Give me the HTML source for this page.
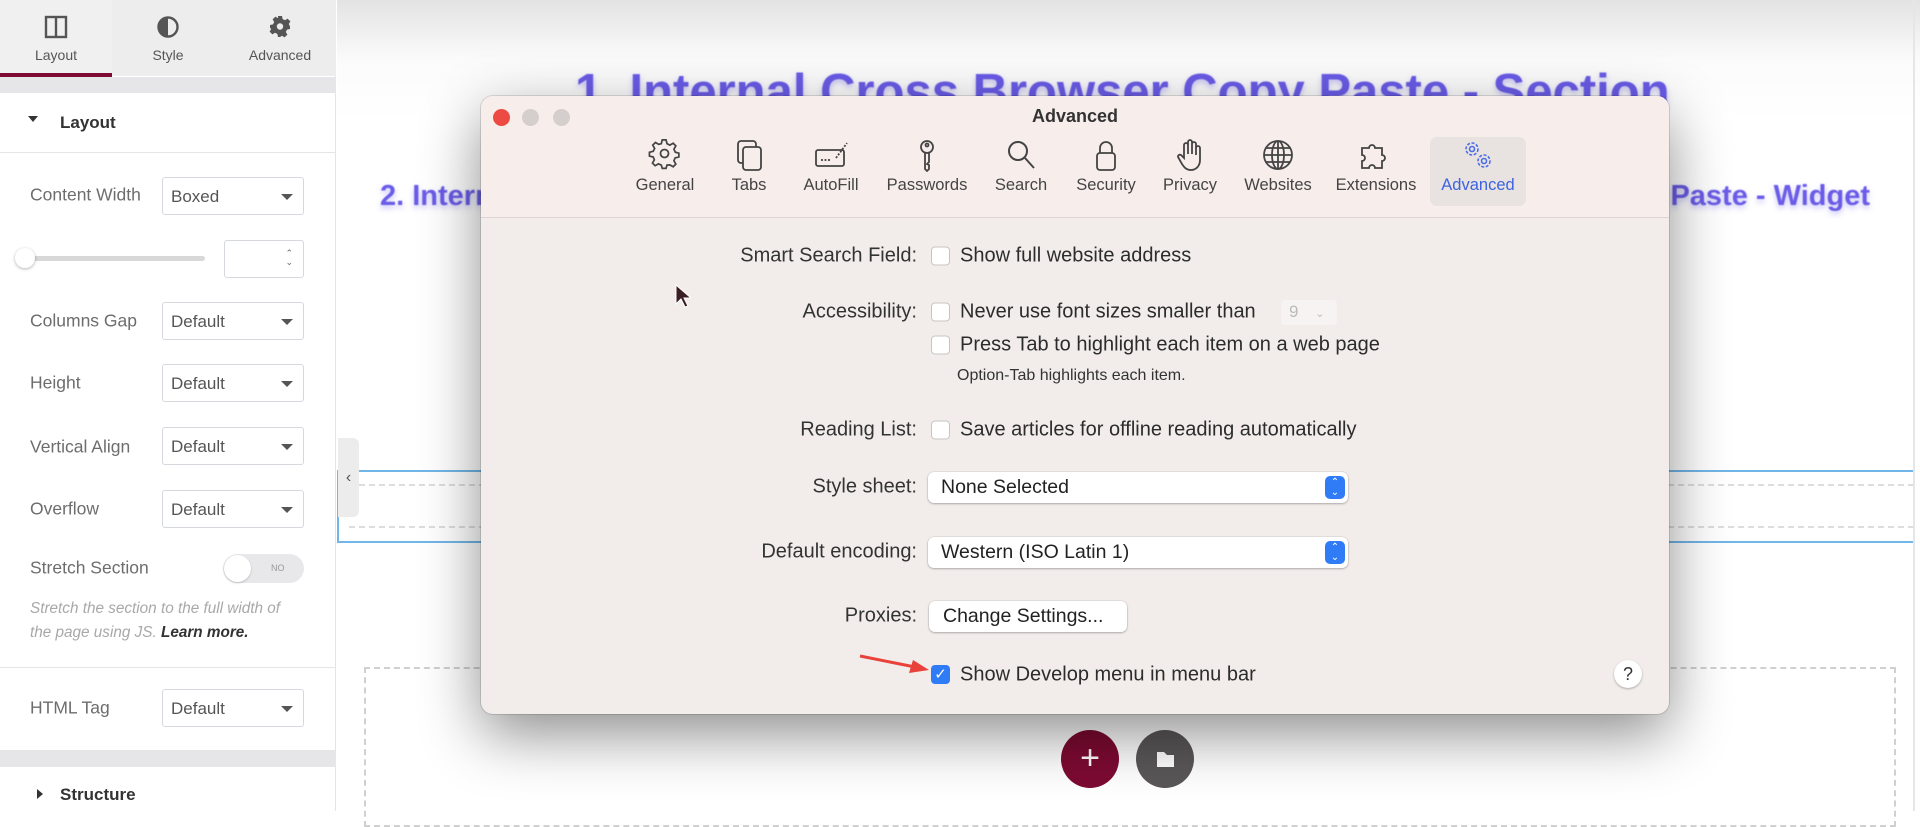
<!DOCTYPE html>
<html><head><meta charset="utf-8"><style>
*{box-sizing:border-box;margin:0;padding:0}
body{width:1920px;height:811px;overflow:hidden;background:#fff;font-family:"Liberation Sans",sans-serif;position:relative}
.abs{position:absolute}
#left{left:0;top:0;width:336px;height:811px;background:#fff;border-right:1px solid #e4e4e4}
.tab{position:absolute;top:0;width:112px;height:76px;text-align:center;color:#555;font-size:14px;background:#ededed}
.tab .lbl{position:absolute;top:47px;width:100%}
.tab svg{position:absolute;top:15px;left:44px}
.lab{position:absolute;left:30px;font-size:17.5px;color:#6d6d6d;transform:translateY(-50%)}
.sel{position:absolute;left:162px;width:142px;height:38px;border:1px solid #d5d8dc;border-radius:3px;font-size:17px;color:#555;padding:9px 8px}
.sel:after{content:"";position:absolute;right:10px;top:16px;border:6px solid transparent;border-top:6px solid #555;border-bottom:0}
#canvas{left:337px;top:0;width:1583px;height:811px;background:linear-gradient(#e3e3e3 0,#fbfbfb 60px,#fff 120px)}
.ttl{position:absolute;color:#6a5ce8;font-weight:bold;filter:blur(.6px);text-shadow:0 3px 6px rgba(100,90,230,.35);white-space:nowrap}
#dlg{left:481px;top:96px;width:1188px;height:618px;background:#f2edeb;border-radius:12px;box-shadow:0 20px 60px rgba(0,0,0,.45),0 0 0 1px rgba(0,0,0,.12);overflow:hidden}
#tb{position:absolute;left:0;top:0;width:100%;height:122px;background:#f7eeeb;border-bottom:1px solid #dcd5d3}
.tl{position:absolute;top:13px;width:17px;height:17px;border-radius:50%;background:#d4cfcd}
.ti{position:absolute;top:42px;width:100px;text-align:center;font-size:16.5px;color:#444}
.ti svg{display:block;margin:0 auto 4px;width:34px;height:34px}
.dl{position:absolute;right:752px;font-size:20px;color:#333;transform:translateY(-50%);white-space:nowrap}
.cb{position:absolute;left:450px;width:19px;height:19px;border:1px solid #c9c4c2;border-radius:4px;background:#fff;transform:translateY(-50%)}
.dt{position:absolute;left:479px;font-size:20px;color:#2c2c2c;transform:translateY(-50%);white-space:nowrap}
.pop{position:absolute;left:447px;width:420px;height:31px;background:#fff;border-radius:6px;box-shadow:0 1px 2px rgba(0,0,0,.25),0 0 0 .5px rgba(0,0,0,.1);font-size:19.5px;color:#222;padding:4px 13px}
.pop i{position:absolute;right:3px;top:4px;width:20px;height:23px;border-radius:5px;background:#2f7cf6;color:#fff;font-style:normal;font-size:10px;line-height:10px;text-align:center;padding-top:2px}
</style></head><body>

<div id="canvas" class="abs">
 <div class="ttl" style="left:238px;top:64px;font-size:49px">1. Internal Cross Browser Copy Paste - Section</div>
 <div class="ttl" style="left:43px;top:180px;font-size:29px">2. Internal Cross Browser Copy Paste - Widget</div>
 <div class="ttl" style="right:50px;top:180px;font-size:29px">Cross Browser Copy Paste - Widget</div>
 <div class="abs" style="left:0;top:470px;width:1577px;height:73px;border:2px solid #71b6e8;border-right:none"></div>
 <div class="abs" style="left:12px;top:484px;width:1565px;height:44px;border-top:2px dashed #ddd;border-bottom:2px dashed #ddd"></div>
 <div class="abs" style="left:27px;top:667px;width:1532px;height:160px;border:2px dashed #d0d0d0"></div>
 <div class="abs" style="left:1576px;top:0;width:2px;height:811px;background:#e6e6e6"></div>
 <div class="abs" style="left:724px;top:730px;width:58px;height:58px;border-radius:50%;background:#7d0a32;color:#fff;font-size:34px;text-align:center;line-height:56px">+</div>
 <div class="abs" style="left:799px;top:730px;width:58px;height:58px;border-radius:50%;background:#5a5758">
  <svg width="58" height="58" viewBox="0 0 58 58"><path d="M21 22h7l3 3h7v12H21z" fill="#fff"/></svg></div>
 <div class="abs" style="left:1px;top:438px;width:21px;height:79px;background:#ececec;border-radius:0 6px 6px 0;color:#555;font-size:16px;text-align:center;line-height:79px">‹</div>
</div>

<div id="left" class="abs">
 <div class="tab" style="left:0;background:#f0f0f0">
  <svg width="24" height="24" viewBox="0 0 24 24"><rect x="2" y="2" width="20" height="20" fill="none" stroke="#555" stroke-width="2.4"/><path d="M12 2v20" stroke="#555" stroke-width="2.4"/></svg><div class="lbl">Layout</div></div>
 <div class="abs" style="left:0;top:73px;width:112px;height:4px;background:#7d0a32"></div>
 <div class="tab" style="left:112px">
  <svg width="24" height="24" viewBox="0 0 24 24"><circle cx="12" cy="12" r="9.5" fill="none" stroke="#555" stroke-width="2.4"/><path d="M12 2.5a9.5 9.5 0 0 0 0 19z" fill="#555"/></svg><div class="lbl">Style</div></div>
 <div class="tab" style="left:224px">
  <svg width="24" height="24" viewBox="0 0 24 24"><path d="M10 1h4l.6 3 2.4 1.2 2.6-1.6 2.8 2.8-1.6 2.6L22 11.4V14l-3 .6-1.2 2.4 1.6 2.6-2.8 2.8-2.6-1.6L12 22h-2l-.6-3-2.4-1.2-2.6 1.6-2.8-2.8 1.6-2.6L2 12.6V10l3-.6L6.2 7 4.6 4.4 7.4 1.6 10 3.2z" fill="#555"/><circle cx="12" cy="11.5" r="3.2" fill="#ededed"/></svg><div class="lbl">Advanced</div></div>
 <div class="abs" style="left:0;top:77px;width:336px;height:16px;background:#e6e6e8"></div>
 <div class="abs" style="left:28px;top:116px;border:5px solid transparent;border-top:6px solid #333;border-bottom:0"></div>
 <div class="abs" style="left:60px;top:113px;font-size:17px;font-weight:bold;color:#333">Layout</div>
 <div class="abs" style="left:0;top:152px;width:336px;height:1px;background:#e6e6e6"></div>
 <div class="lab" style="top:195px">Content Width</div><div class="sel" style="top:177px">Boxed</div>
 <div class="abs" style="left:30px;top:256px;width:175px;height:5px;background:#d8d8d8;border-radius:3px"></div>
 <div class="abs" style="left:15px;top:248px;width:20px;height:20px;background:#fff;border-radius:50%;box-shadow:0 1px 3px rgba(0,0,0,.3)"></div>
 <div class="abs" style="left:224px;top:240px;width:80px;height:38px;border:1px solid #d5d8dc;border-radius:3px;font-size:9px;color:#666;text-align:right;padding:8px 10px;line-height:9px">⌃<br>⌄</div>
 <div class="lab" style="top:321px">Columns Gap</div><div class="sel" style="top:302px">Default</div>
 <div class="lab" style="top:383px">Height</div><div class="sel" style="top:364px">Default</div>
 <div class="lab" style="top:447px">Vertical Align</div><div class="sel" style="top:427px">Default</div>
 <div class="lab" style="top:509px">Overflow</div><div class="sel" style="top:490px">Default</div>
 <div class="lab" style="top:568px">Stretch Section</div>
 <div class="abs" style="left:223px;top:554px;width:81px;height:29px;border-radius:15px;background:#e8e8ea;font-size:9px;color:#999;padding:9px 0 0 48px">NO</div>
 <div class="abs" style="left:224px;top:555px;width:27px;height:27px;border-radius:50%;background:#fff;box-shadow:0 1px 2px rgba(0,0,0,.2)"></div>
 <div class="abs" style="left:30px;top:597px;width:285px;font-size:15.3px;line-height:24px;font-style:italic;color:#a8a8a8">Stretch the section to the full width of<br>the page using JS. <b style="color:#333">Learn more.</b></div>
 <div class="abs" style="left:0;top:667px;width:336px;height:1px;background:#e6e6e6"></div>
 <div class="lab" style="top:708px">HTML Tag</div><div class="sel" style="top:689px">Default</div>
 <div class="abs" style="left:0;top:750px;width:336px;height:17px;background:#e6e6e8"></div>
 <div class="abs" style="left:37px;top:789px;border:5px solid transparent;border-left:6px solid #333;border-right:0"></div>
 <div class="abs" style="left:60px;top:785px;font-size:17px;font-weight:bold;color:#333">Structure</div>
</div>

<div id="dlg" class="abs">
 <div id="tb">
  <div class="tl" style="left:12px;background:#ec4a43"></div>
  <div class="tl" style="left:41px"></div>
  <div class="tl" style="left:72px"></div>
  <div class="abs" style="left:0;top:10px;width:100%;text-align:center;font-size:18px;font-weight:bold;color:#333">Advanced</div>
  <div class="abs" style="left:949px;top:41px;width:96px;height:69px;background:#e8e2e1;border-radius:7px"></div>
  <div class="ti" style="left:134px"><svg viewBox="0 0 34 34" fill="none" stroke="#444" stroke-width="1.8"><path d="M15 4h4l1 4 3 1.5 3.5-2 2.8 2.8-2 3.5L28.8 17l3.7 1v4l-4 1-1.2 3 2 3.5-2.8 2.8-3.5-2L20 30.5 19 34h-4l-1-3.5-3-1.3-3.5 2-2.8-2.8 2-3.5L5.5 22l-4-1v-4l4-1L7 13 5 9.5l2.8-2.8 3.5 2L14 8z" transform="scale(.95) translate(0,-2)"/><circle cx="16.5" cy="15.5" r="4"/></svg>General</div>
  <div class="ti" style="left:218px"><svg viewBox="0 0 34 34" fill="none" stroke="#444" stroke-width="1.8"><rect x="6" y="3" width="18" height="22" rx="3"/><rect x="11" y="9" width="18" height="23" rx="3" fill="#f7eeeb"/></svg>Tabs</div>
  <div class="ti" style="left:300px"><svg viewBox="0 0 34 34" fill="none" stroke="#444" stroke-width="1.8"><rect x="2" y="12" width="28" height="16" rx="2"/><path d="M22 20L33 5M7 22h10" stroke-dasharray="2 1.5"/></svg>AutoFill</div>
  <div class="ti" style="left:396px"><svg viewBox="0 0 34 34" fill="none" stroke="#444" stroke-width="1.8"><circle cx="17" cy="9" r="6"/><circle cx="17" cy="7" r="1.5"/><path d="M15 15v16l2 2 2-2v-4l-2-1 2-2v-9"/></svg>Passwords</div>
  <div class="ti" style="left:490px"><svg viewBox="0 0 34 34" fill="none" stroke="#444" stroke-width="2"><circle cx="14" cy="13" r="9"/><path d="M21 20l9 10"/></svg>Search</div>
  <div class="ti" style="left:575px"><svg viewBox="0 0 34 34" fill="none" stroke="#444" stroke-width="1.8"><path d="M11 15V10a6 6 0 0 1 12 0v5"/><rect x="8" y="15" width="18" height="17" rx="3"/></svg>Security</div>
  <div class="ti" style="left:659px"><svg viewBox="0 0 34 34" fill="none" stroke="#444" stroke-width="1.8"><path d="M11 20V7a2 2 0 0 1 4 0v9V4a2 2 0 0 1 4 0v12V6a2 2 0 0 1 4 0v11V10a2 2 0 0 1 4 0v12c0 6-4 10-9 10s-7-3-9-6l-4-7a2 2 0 0 1 3-2z"/></svg>Privacy</div>
  <div class="ti" style="left:747px"><svg viewBox="0 0 34 34" fill="none" stroke="#444" stroke-width="1.8"><circle cx="17" cy="17" r="14"/><ellipse cx="17" cy="17" rx="6" ry="14"/><path d="M3 17h28M5 10h24M5 24h24M17 3v28"/></svg>Websites</div>
  <div class="ti" style="left:845px"><svg viewBox="0 0 34 34" fill="none" stroke="#444" stroke-width="1.8"><path d="M3 10h7a3 3 0 1 1 6 0h7v7a3 3 0 1 1 0 6v7h-7a3 3 0 1 0-6 0H3v-7a3 3 0 1 0 0-6z"/></svg>Extensions</div>
  <div class="ti" style="left:947px;color:#3d63e0"><svg viewBox="0 0 34 34" fill="none" stroke="#4a6ee8" stroke-width="1.6"><circle cx="11" cy="11" r="6" stroke-dasharray="3 1.6"/><circle cx="11" cy="11" r="2.5"/><circle cx="23" cy="23" r="6" stroke-dasharray="3 1.6"/><circle cx="23" cy="23" r="2.5"/></svg>Advanced</div>
 </div>

 <div class="dl" style="top:160px">Smart Search Field:</div><div class="cb" style="top:160px"></div><div class="dt" style="top:160px">Show full website address</div>
 <div class="dl" style="top:216px">Accessibility:</div><div class="cb" style="top:216px"></div><div class="dt" style="top:216px">Never use font sizes smaller than</div>
 <div class="abs" style="left:800px;top:204px;width:56px;height:25px;background:#f7f3f2;border-radius:4px;font-size:17px;color:#bbb;padding:2px 8px">9 <span style="font-size:11px;margin-left:12px">⌄</span></div>
 <div class="cb" style="top:249px"></div><div class="dt" style="top:249px">Press Tab to highlight each item on a web page</div>
 <div class="dt" style="top:280px;left:476px;font-size:16px;color:#333">Option-Tab highlights each item.</div>
 <div class="dl" style="top:334px">Reading List:</div><div class="cb" style="top:334px"></div><div class="dt" style="top:334px">Save articles for offline reading automatically</div>
 <div class="dl" style="top:391px">Style sheet:</div><div class="pop" style="top:376px">None Selected<i>⌃<br>⌄</i></div>
 <div class="dl" style="top:456px">Default encoding:</div><div class="pop" style="top:441px">Western (ISO Latin 1)<i>⌃<br>⌄</i></div>
 <div class="dl" style="top:520px">Proxies:</div>
 <div class="abs" style="left:448px;top:505px;width:198px;height:31px;background:#fff;border-radius:6px;box-shadow:0 1px 2px rgba(0,0,0,.25),0 0 0 .5px rgba(0,0,0,.1);font-size:19.5px;color:#222;padding:4px 14px;white-space:nowrap">Change Settings...</div>
 <div class="abs" style="left:450px;top:569px;width:19px;height:19px;border-radius:4px;background:#2f7cf6;color:#fff;font-size:15px;text-align:center;line-height:19px">✓</div>
 <div class="dt" style="top:579px">Show Develop menu in menu bar</div>
 <div class="abs" style="left:1133px;top:564px;width:28px;height:28px;border-radius:50%;background:#fff;box-shadow:0 1px 2px rgba(0,0,0,.3);font-size:18px;color:#333;text-align:center;line-height:28px">?</div>
 <svg class="abs" style="left:376px;top:556px" width="74" height="24" viewBox="0 0 74 24"><path d="M3 4L58 15" stroke="#e8423b" stroke-width="3"/><path d="M72 18L52 21 56 8z" fill="#e8423b"/></svg>
 <svg class="abs" style="left:194px;top:188px" width="16" height="24" viewBox="0 0 16 24"><path d="M1 1v19l5-5 4 8 3-1-4-8h7z" fill="#3a1e22" stroke="#fff" stroke-width="1"/></svg>
</div>
</body></html>
